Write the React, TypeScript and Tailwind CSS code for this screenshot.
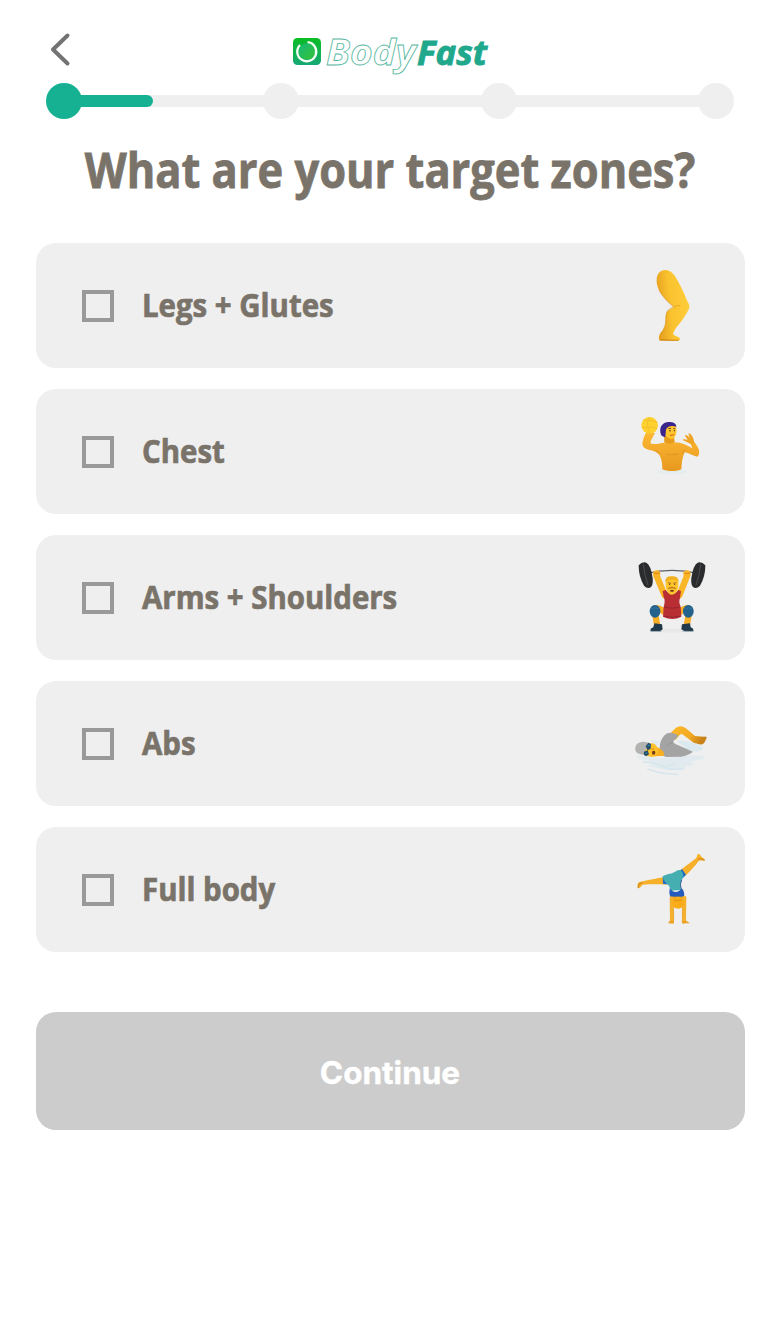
import { useState } from "react";
import type { ReactNode } from "react";

const LegIcon = () => (
  <svg viewBox="-15 2 285 300" className="h-[100px] w-[95px]">
    <defs>
      <linearGradient id="leg" x1="0" y1="0.2" x2="1" y2="0">
        <stop offset="0" stopColor="#e8a421" />
        <stop offset="0.35" stopColor="#fac22f" />
        <stop offset="1" stopColor="#ffcf3c" />
      </linearGradient>
    </defs>
    <path
      d="M80 72C81 54 92 43 107 44C122 45 133 57 142 74C153 94 163 115 170 133C175 143 180 149 178 157C175 166 166 180 157 194C145 209 133 222 129 236C133 242 144 243 150 249C151 255 145 257 135 257L90 256C84 252 87 240 91 234C99 226 103 217 106 207C107 194 105 180 110 170C116 162 126 160 131 154C117 143 101 128 90 110C83 98 79 86 80 72Z"
      fill="url(#leg)"
    />
    <path d="M131 154C139 150 145 151 151 151" stroke="#c97f13" strokeWidth="3" fill="none" opacity=".4" />
    <path d="M87 104C98 126 115 141 131 154C116 161 109 166 109 182C109 204 104 222 92 236" stroke="#cf8415" strokeWidth="4" fill="none" opacity=".35" />
    <path d="M89 253L108 254L146 255" stroke="#c97e16" strokeWidth="4" opacity=".65" />
  </svg>
);

const WaterPoloIcon = () => (
  <svg viewBox="-15 6 285 300" className="h-[100px] w-[95px]">
    <defs>
      <linearGradient id="torso" x1="0" y1="0" x2="0" y2="1">
        <stop offset="0" stopColor="#fdb934" />
        <stop offset="1" stopColor="#e8981f" />
      </linearGradient>
    </defs>
    <ellipse cx="126" cy="214" rx="45" ry="9" fill="#e6edee" />
    <path
      d="M51 94C43 105 38 121 37 132C38 142 48 148 60 150C69 153 81 155 88 165C96 178 97 193 97 208C109 215 144 215 154 208C155 190 157 171 164 157C176 158 187 167 201 170C208 168 209 158 206 148C202 137 195 128 190 122L180 127L187 145C176 139 162 130 149 128L133 127L109 127L85 131C76 132 67 133 61 130C62 120 69 111 75 99Z"
      fill="url(#torso)"
    />
    <path d="M180 131C172 124 162 124 158 119C162 116 168 119 173 119L165 107C168 102 174 109 179 113L175 101C182 99 188 109 191 119L192 131Z" fill="#efa423" />
    <circle cx="59" cy="76" r="25" fill="#ffd12f" />
    <path d="M40 59C54 63 72 60 82 68M36 84C53 80 72 80 81 87M58 52C50 66 51 83 59 100" fill="none" stroke="#f1c02b" strokeWidth="3" />
    <path d="M102 107L103 127C112 133 128 132 134 126L132 109Z" fill="#e99c1b" />
    <path d="M103 80C112 70 132 68 138 80C142 96 138 112 126 117C114 116 103 108 103 94Z" fill="#ffc52d" />
    <path d="M91 97C89 78 99 67 116 66C129 66 139 70 139 80C123 76 112 79 108 89L106 111C98 112 92 106 91 97Z" fill="#3b258d" />
    <path d="M115 86L123 85M130 86L136 86" stroke="#6d4316" strokeWidth="3" />
    <circle cx="120" cy="92" r="2.3" fill="#49351f" />
    <circle cx="133" cy="92" r="2" fill="#49351f" />
    <path d="M120 106Q127 107 133 103" stroke="#d3591e" strokeWidth="3" fill="none" />
    <path d="M89 163Q84 155 76 152M158 162Q160 151 166 149M108 162Q123 167 145 162" stroke="#c97917" strokeWidth="3" fill="none" opacity=".4" />
  </svg>
);

const WeightLifterIcon = () => (
  <svg viewBox="0 8 285 300" className="h-[100px] w-[95px]">
    <ellipse cx="142" cy="256" rx="68" ry="6" fill="#e8e8e8" />
    <path d="M65 84Q141 66 218 84" fill="none" stroke="#5d6267" strokeWidth="4" />
    <path d="M95 92L119 150M186 92L163 150" stroke="#f9b626" strokeWidth="19" strokeLinecap="round" />
    <path d="M41 60Q52 48 64 52Q77 58 83 98Q85 119 77 126Q67 131 57 121Q41 95 41 60Z" fill="#292b2d" />
    <path d="M241 60Q230 48 218 52Q205 58 199 98Q197 119 205 126Q215 131 225 121Q241 95 241 60Z" fill="#292b2d" />
    <path d="M55 57Q58 88 69 120M227 57Q224 88 213 120" stroke="#4b4e52" strokeWidth="3" fill="none" />
    <circle cx="95" cy="86" r="11" fill="#fbb426" />
    <circle cx="186" cy="86" r="11" fill="#fbb426" />
    <path d="M87 84H104M178 84H195" stroke="#d88918" strokeWidth="3" />
    <path d="M119 201C107 190 93 184 88 192L97 242M163 201C175 190 189 184 194 192L185 242" fill="none" stroke="#f5ae25" strokeWidth="19" strokeLinejoin="round" />
    <path d="M113 137L122 134Q141 158 160 134L168 137L165 158Q160 171 167 184L169 214Q142 228 114 214L116 184Q122 166 116 156Z" fill="#b92e32" />
    <path d="M118 186Q144 191 164 186M118 213Q143 219 165 213" stroke="#962532" strokeWidth="3" fill="none" />
    <path d="M122 107C123 90 158 89 160 108C162 131 155 147 141 148C128 148 120 131 122 107Z" fill="#ffc52f" />
    <path d="M121 109Q121 92 140 93Q160 92 161 109L153 103L132 104Z" fill="#f2af1e" />
    <path d="M129 112L138 114M145 114L154 112" stroke="#a66616" strokeWidth="3" />
    <circle cx="134" cy="117" r="2" fill="#593a16" />
    <circle cx="149" cy="117" r="2" fill="#593a16" />
    <path d="M130 130Q141 123 152 130" fill="none" stroke="#c27c16" strokeWidth="4" />
    <path d="M135 135Q141 132 147 135L145 139H137Z" fill="#7b3617" />
    <ellipse cx="90" cy="198" rx="16" ry="19" fill="#22628d" />
    <ellipse cx="190" cy="198" rx="16" ry="19" fill="#22628d" />
    <path d="M79 190Q90 185 101 190M179 190Q190 185 201 190" fill="none" stroke="#3475a0" strokeWidth="3" />
    <path d="M88 234L111 237L113 252L105 258H77Q74 249 85 246ZM195 234L171 237L169 252L179 258H205Q207 249 197 246Z" fill="#21394b" />
    <path d="M77 258H110M172 258H205" stroke="#93a4ad" strokeWidth="2" />
  </svg>
);

const SwimmerIcon = () => (
  <svg viewBox="0 -35 285 300" className="h-[100px] w-[95px]">
    <defs>
      <linearGradient id="swimArm" x1="0" y1="0" x2="1" y2="0.4">
        <stop offset="0" stopColor="#fdba29" />
        <stop offset="0.65" stopColor="#f3aa23" />
        <stop offset="1" stopColor="#c98218" />
      </linearGradient>
    </defs>
    <path d="M30 149C49 156 62 150 81 156C104 159 130 157 165 151C194 147 215 148 243 153C233 164 211 162 195 168C221 174 199 184 172 181C192 190 168 196 149 194C116 195 91 183 65 181C82 177 91 171 72 166C57 163 40 161 30 149Z" fill="#e1ebef" />
    <path d="M155 105C187 104 212 110 230 121C240 128 231 136 215 138L187 132Z" fill="#dceaef" />
    <path d="M76 106Q88 101 102 106L104 120H90Z" fill="#e1ebef" />
    <path d="M92 175Q115 184 148 176M54 169Q92 170 111 183Q148 196 179 187M69 190Q110 206 158 206" stroke="#d6e6ec" strokeWidth="5" fill="none" strokeLinecap="round" />
    <path d="M137 82L152 67Q162 59 174 63Q182 66 188 72L210 91L238 93Q246 91 245 97L238 111Q231 119 223 116L206 111L172 86Q168 84 164 88L151 103Z" fill="url(#swimArm)" />
    <path d="M104 126Q104 105 119 88Q129 79 143 82Q158 86 160 91L144 108Q148 115 160 119L204 138Q191 149 168 153L124 154Q108 151 104 126Z" fill="#a4a4a5" />
    <path d="M144 109Q132 112 128 121" fill="none" stroke="#929294" strokeWidth="3" />
    <path d="M79 123C94 120 106 128 114 137C119 144 119 152 111 151C97 149 86 156 75 151Z" fill="#f7ae21" />
    <path d="M67 117C80 108 93 114 98 128C102 142 95 152 79 153C67 153 56 148 57 139Z" fill="#ffc02b" />
    <path d="M31 132C29 118 41 106 61 109C73 110 78 116 78 121L62 132L55 147C42 145 33 143 31 132Z" fill="#b3b3b2" />
    <path d="M62 122L70 111L78 115L77 129L68 134ZM57 138L68 134L72 146L63 152L56 147Z" fill="#244d67" />
    <path d="M68 121L74 118M61 144L67 141" stroke="#2c9bc4" strokeWidth="3" />
    <ellipse cx="86" cy="141" rx="5" ry="6" fill="#753b18" />
    <path d="M80 131L87 129" stroke="#d08619" strokeWidth="3" />
  </svg>
);

const HandstandIcon = () => (
  <svg viewBox="0 -1 285 300" className="h-[100px] w-[95px]">
    <path d="M122 111C99 112 75 119 54 123C48 124 42 124 39 129C36 137 38 145 43 144L53 133C74 132 99 131 125 133ZM165 90C183 77 201 63 214 53L217 43C222 38 226 43 229 49C234 53 242 56 239 60C232 63 226 58 221 62C211 77 195 93 180 107Z" fill="#f6b02a" />
    <path d="M53 127L42 131L39 143M219 55L230 56L239 60" fill="none" stroke="#c7821f" strokeWidth="3" />
    <path d="M113 110L127 112L136 133L114 130ZM163 94L171 86L183 103L170 117Z" fill="#1d6bca" />
    <path d="M113 108C119 102 137 102 149 95C156 90 162 87 167 90C175 98 178 108 170 118C165 126 166 136 168 149L136 151C136 140 132 136 124 129C119 124 114 117 113 108Z" fill="#45aeb0" />
    <path d="M134 144C143 158 160 160 170 144C177 151 179 160 177 171H136Q131 160 134 144Z" fill="#245bbd" />
    <path d="M170 118Q163 131 169 149" stroke="#2b5c96" strokeWidth="3" fill="none" />
    <path d="M140 174L141 244M178 172L177 244" stroke="#f5b12d" strokeWidth="12" strokeLinecap="round" />
    <path d="M134 241L147 241L147 249H129ZM170 241H184L195 249H171Z" fill="#eaa328" />
    <path d="M146 196V236M172 196V236" stroke="#d38b1d" strokeWidth="2" fill="none" opacity=".5" />
    <path d="M144 169H173V184H144Z" fill="#f0a41f" />
    <circle cx="159" cy="187" r="18" fill="#f8ac18" />
    <path d="M147 179Q158 185 171 178" fill="none" stroke="#dc9216" strokeWidth="3" />
  </svg>
);

const Logo = () => (
  <svg viewBox="0 0 200 52" className="h-[52px] w-[200px] overflow-visible">
    <defs>
      <linearGradient id="badge" x1="0" y1="0" x2="0" y2="1">
        <stop offset="0" stopColor="#08bd24" />
        <stop offset="1" stopColor="#16a875" />
      </linearGradient>
      <linearGradient id="dial" x1="0" y1="0" x2="1" y2="1">
        <stop offset="0" stopColor="#16b979" />
        <stop offset="1" stopColor="#35c332" />
      </linearGradient>
    </defs>
    <rect x="3" y="8" width="28" height="27" rx="4.5" fill="url(#badge)" />
    <circle cx="17" cy="21.5" r="8" fill="url(#dial)" />
    <path d="M17.5 12.2A9.5 9.5 0 1 1 10 15" fill="none" stroke="#f4fff6" strokeWidth="2.3" />
    <text
      x="36"
      y="34.5"
      textLength="90"
      lengthAdjust="spacingAndGlyphs"
      className="fill-white stroke-[#56b8a0] stroke-[0.8px] font-['Open_Sans',sans-serif] text-[35px] font-bold italic"
    >
      Body
    </text>
    <text
      x="127"
      y="34.5"
      textLength="70"
      lengthAdjust="spacingAndGlyphs"
      className="fill-[#1fa88c] stroke-[#1fa88c] stroke-[0.9px] font-['Open_Sans',sans-serif] text-[34.5px] font-bold italic"
    >
      Fast
    </text>
  </svg>
);

const zones: { id: string; label: string; icon: ReactNode }[] = [
  { id: "legs", label: "Legs + Glutes", icon: <LegIcon /> },
  { id: "chest", label: "Chest", icon: <WaterPoloIcon /> },
  { id: "arms", label: "Arms + Shoulders", icon: <WeightLifterIcon /> },
  { id: "abs", label: "Abs", icon: <SwimmerIcon /> },
  { id: "full", label: "Full body", icon: <HandstandIcon /> },
];

const Progress = () => (
  <div className="mx-[46px] flex h-9 items-center">
    <div className="z-10 size-9 rounded-full bg-[#16b193]" />
    {[0, 1, 2].map((segment) => (
      <div key={segment} className="flex flex-1 items-center">
        <div className="-mx-1 h-3 flex-1 bg-[#efefef]">
          {segment === 0 && (
            <div className="h-3 w-[75px] rounded-r-full bg-[#16b193]" />
          )}
        </div>
        <div className="size-9 rounded-full bg-[#efefef]" />
      </div>
    ))}
  </div>
);

export default function App() {
  const [selected, setSelected] = useState<string[]>([]);

  const toggle = (id: string) => {
    setSelected((prev) =>
      prev.includes(id) ? prev.filter((item) => item !== id) : [...prev, id]
    );
  };

  return (
    <div className="flex min-h-screen w-full flex-col bg-white font-['Open_Sans',sans-serif] text-[#79736a]">
      <header className="grid h-[82.5px] grid-cols-[1fr_200px_1fr] items-start px-[46px] pt-[30px]">
        <button type="button" aria-label="Back" className="w-8">
          <svg viewBox="0 0 32 40" className="h-10 w-8">
            <path
              d="M21.5 5.5L7 19.5L21.5 33.5"
              fill="none"
              stroke="#737373"
              strokeWidth="4"
              strokeLinecap="round"
              strokeLinejoin="round"
            />
          </svg>
        </button>
        <Logo />
      </header>
      <Progress />

      <h1 className="mt-[17px] flex h-[68px] justify-center text-[47.5px] leading-[68px] font-bold whitespace-nowrap [-webkit-text-stroke:0.8px_#79736a]">
        <span className="inline-block origin-center scale-x-[0.914]">
          What are your target zones?
        </span>
      </h1>

      <main className="mt-[39.5px] flex flex-col gap-[21px] px-[35.5px]">
        {zones.map((zone) => (
          <button
            key={zone.id}
            type="button"
            role="checkbox"
            aria-checked={selected.includes(zone.id)}
            onClick={() => toggle(zone.id)}
            className="flex h-[125px] items-center rounded-[20px] bg-[#efefef] pr-[24.5px] pl-[46px] text-left"
          >
            <span
              className={`size-8 border-4 border-[#999] ${
                selected.includes(zone.id) ? "bg-[#16b193]" : ""
              }`}
            />
            <span className="ml-7 flex-1 origin-left scale-x-[0.919] pb-[2px] text-[32px] leading-[44px] font-bold [-webkit-text-stroke:0.7px_#79736a]">
              {zone.label}
            </span>
            {zone.icon}
          </button>
        ))}
      </main>

      <div className="mt-[60px] px-[35.5px]">
        <button
          type="button"
          className="h-[118px] w-full rounded-[20px] bg-[#ccc] pt-[3px] font-['Inter',sans-serif] text-[31.5px] font-bold text-white [-webkit-text-stroke:0.4px_#fff]"
        >
          Continue
        </button>
      </div>
    </div>
  );
}
